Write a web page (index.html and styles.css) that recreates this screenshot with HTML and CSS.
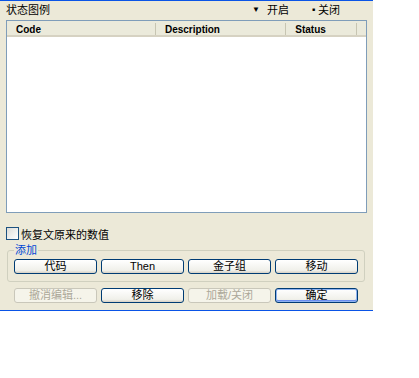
FILE: index.html
```html
<!DOCTYPE html>
<html lang="zh-CN">
<head>
  <meta charset="UTF-8" />
  <title>状态图例</title>
  <link rel="stylesheet" href="styles.css">
</head>
<body>
  <div class="window">
    <div class="legend">
      <span class="legend-title">状态图例</span>
      <span class="legend-item legend-open"><span class="mark">▼</span>开启</span>
      <span class="legend-item legend-closed"><span class="mark">■</span>关闭</span>
    </div>

    <div class="list">
      <div class="list-header">
        <div class="col col-code">Code</div>
        <div class="col col-desc">Description</div>
        <div class="col col-status">Status</div>
        <div class="col col-rest"></div>
      </div>
      <div class="list-body"></div>
    </div>

    <label class="check-row">
      <span class="checkbox"></span>
      <span>恢复文原来的数值</span>
    </label>

    <fieldset class="group">
      <legend>添加</legend>
      <div class="btn-row">
        <button class="btn">代码</button>
        <button class="btn">Then</button>
        <button class="btn">金子组</button>
        <button class="btn">移动</button>
      </div>
    </fieldset>

    <div class="btn-row bottom-row">
      <button class="btn" disabled>撤消编辑...</button>
      <button class="btn">移除</button>
      <button class="btn" disabled>加载/关闭</button>
      <button class="btn btn-default">确定</button>
    </div>
  </div>
</body>
</html>
```

FILE: styles.css
```css
* {
  margin: 0;
  padding: 0;
  box-sizing: border-box;
}

body {
  background: #ffffff;
  font-family: 'Liberation Sans', 'Noto Sans CJK SC', sans-serif;
  font-size: 11px;
  color: #000;
}

.window {
  width: 373px;
  height: 311px;
  background: #ece9d8;
  border-top: 1px solid #0a54e6;
  border-bottom: 1px solid #0a54e6;
  padding: 0 6px 0 6px;
}

.legend {
  display: flex;
  align-items: center;
  height: 19px;
  padding-bottom: 3px;
}

.legend-title {
  flex: 1;
}

.legend-item {
  display: flex;
  align-items: center;
}

.legend-item .mark {
  font-size: 8px;
}

.legend-open {
  width: 60px;
}

.legend-open .mark {
  width: 15px;
}

.legend-closed {
  width: 55px;
}

.legend-closed .mark {
  width: 6px;
  font-size: 5px;
}

.list {
  width: 361px;
  height: 193px;
  border: 1px solid #7f9db9;
  background: #fff;
}

.list-header {
  display: flex;
  height: 16px;
  background: #ebeadb;
  border-bottom: 2px solid #d6d2c2;
  font-weight: bold;
  font-size: 10px;
}

.col {
  padding-left: 9px;
  line-height: 14px;
  border-right: 1px solid #c7c5b2;
  margin: 2px 0 0 0;
}

.col-code {
  width: 152px;
}

.col-desc {
  width: 133px;
}

.col-status {
  width: 72px;
}

.col-rest {
  flex: 1;
  border-right: none;
}

.check-row {
  display: flex;
  align-items: center;
  gap: 2px;
  margin-top: 14px;
  height: 13px;
}

.checkbox {
  width: 13px;
  height: 13px;
  border: 1px solid #1c5180;
  background: linear-gradient(135deg, #dcdcd7, #ffffff);
}

.group {
  width: 358px;
  margin: 4px 0 0 1px;
  border: 1px solid #d0d0bf;
  border-radius: 3px;
  padding: 3px 6px 7px 6px;
}

.group legend {
  color: #0046d5;
  padding: 0 1px;
  margin-left: 0;
  line-height: 12px;
}

.btn-row {
  display: grid;
  grid-template-columns: repeat(4, 83px);
  gap: 4px;
}

.bottom-row {
  margin: 6px 0 0 8px;
}

.btn {
  height: 15px;
  font-family: 'Liberation Sans', 'Noto Sans CJK SC', sans-serif;
  font-size: 11px;
  line-height: 11px;
  color: #000;
  border: 1px solid #003c74;
  border-radius: 3px;
  background: linear-gradient(#ffffff, #f0f0ea 80%, #d6d0c5);
}

.btn:disabled {
  color: #aca899;
  border-color: #c9c7ba;
  background: #f5f4ea;
}

.btn-default {
  box-shadow: inset 0 0 0 1px #8fb3f0, inset 0 -1px 0 1px #6b8ff0;
}
```
